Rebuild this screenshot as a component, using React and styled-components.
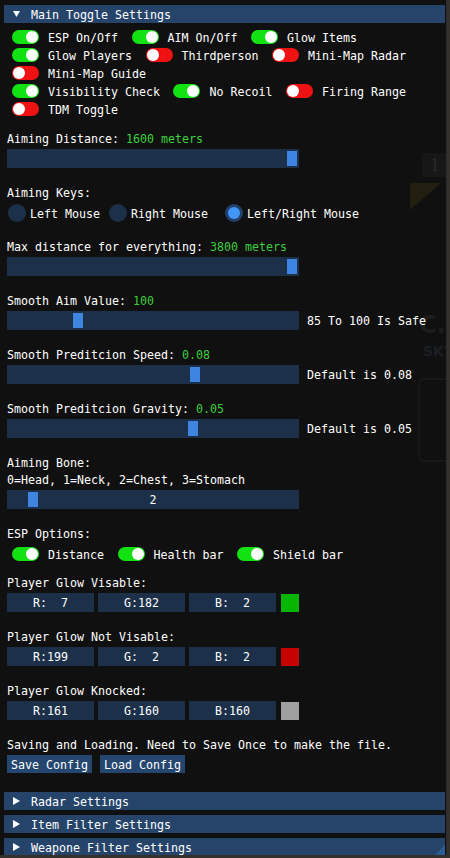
import React from "react";
import styled, { createGlobalStyle } from "styled-components";

const GlobalStyle = createGlobalStyle`
  html, body {
    margin: 0;
    padding: 0;
    background: #34302c;
    overflow: hidden;
  }
  body {
    font-family: "DejaVu Sans Mono", "Liberation Mono", monospace;
    font-size: 11.63px;
    color: #ffffff;
  }
`;

const Window = styled.div`
  position: relative;
  width: 447px;
  height: 855px;
  box-sizing: border-box;
  padding-top: 5px;
  background: #101010;
  border-right: 1px solid #2a2a30;
  overflow: hidden;
  display: flex;
  flex-direction: column;
`;

const Header = styled.div`
  position: relative;
  width: 441px;
  height: 18px;
  margin: ${p => p.$mt || 0}px 0 0 4px;
  flex-shrink: 0;
  background: #26446a;
  display: flex;
  align-items: center;
  padding-left: 9px;
  box-sizing: border-box;
  line-height: 13px;
  svg {
    margin-right: 11px;
  }
`;

// shifts glyphs down a pixel so they sit like the bitmap font
const Caption = styled.span`
  padding-top: 2px;
  line-height: 13px;
  white-space: pre;
`;

const Body = styled.div`
  position: relative;
  display: flex;
  flex-direction: column;
  align-items: flex-start;
  padding-left: 7px;
`;

const Label = styled.div`
  height: 13px;
  line-height: 15px;
  margin-top: ${p => p.$mt || 0}px;
  white-space: pre;
`;

const Value = styled.span`
  color: #3ccf3c;
`;

const ToggleGrid = styled.div`
  margin-top: ${p => p.$mt || 0}px;
  padding-left: 5px;
  display: flex;
  flex-direction: column;
`;

const ToggleRow = styled.div`
  height: 18px;
  display: flex;
  align-items: center;
  gap: 13.5px;
`;

const ToggleItem = styled.div`
  display: flex;
  align-items: center;
  gap: 9px;
`;

const Pill = styled.div`
  width: 27px;
  height: 14px;
  padding: 1px;
  box-sizing: border-box;
  border-radius: 7px;
  background: ${p => (p.$on ? "#12e212" : "#f01212")};
  display: flex;
  justify-content: ${p => (p.$on ? "flex-end" : "flex-start")};
`;

const Knob = styled.div`
  width: 12px;
  height: 12px;
  border-radius: 50%;
  background: #ffffff;
`;

const SliderRow = styled.div`
  margin-top: 4px;
  display: flex;
  align-items: center;
  gap: 8px;
`;

const SliderFrame = styled.div`
  position: relative;
  width: 292px;
  height: 19px;
  box-sizing: border-box;
  padding: 0 2px;
  background: #1d3049;
  display: flex;
  align-items: center;
`;

const Grab = styled.div`
  width: 10px;
  height: 15px;
  background: #3d85e0;
`;

const SliderText = styled.div`
  position: absolute;
  left: 0;
  right: 0;
  top: 4px;
  text-align: center;
  line-height: 13px;
`;

const RadioRow = styled.div`
  margin-top: 5px;
  height: 18px;
  padding-left: 1px;
  display: flex;
  align-items: center;
  gap: 9px;
`;

const RadioItem = styled.div`
  display: flex;
  align-items: center;
  gap: 4px;
  margin-left: ${p => (p.$spaced ? 8 : 0)}px;
`;

const RadioCircle = styled.div`
  width: 18px;
  height: 18px;
  border-radius: 50%;
  background: ${p => (p.$checked ? "#22406a" : "#1d3049")};
  display: flex;
  align-items: center;
  justify-content: center;
  &::after {
    content: "";
    display: ${p => (p.$checked ? "block" : "none")};
    width: 12px;
    height: 12px;
    border-radius: 50%;
    background: #4296fa;
  }
`;

const ColorRow = styled.div`
  margin-top: 4px;
  display: flex;
  align-items: center;
  gap: 4px;
`;

const NumField = styled.div`
  width: 87px;
  height: 19px;
  background: #1d3049;
  text-align: center;
  line-height: 21px;
  white-space: pre;
`;

const Swatch = styled.div`
  width: 18px;
  height: 18px;
  margin-left: 1px;
  background: ${p => p.$color};
`;

const ButtonRow = styled.div`
  margin-top: 4px;
  display: flex;
  gap: 8px;
`;

const Button = styled.div`
  height: 18px;
  padding: 0 4px;
  background: #24466f;
  line-height: 20px;
  white-space: pre;
`;

const Backdrop = styled.div`
  position: absolute;
  left: ${p => p.$x}px;
  top: ${p => p.$y}px;
`;

const NumberBox = styled(Backdrop)`
  width: 26px;
  height: 24px;
  border-radius: 3px;
  background: #171717;
  color: #292929;
  font-family: "DejaVu Serif", serif;
  font-size: 17px;
  line-height: 24px;
  text-align: center;
`;

const Ghost = styled(Backdrop)`
  color: ${p => p.$color};
  font-family: "DejaVu Sans", sans-serif;
  font-weight: bold;
  font-size: ${p => p.$size}px;
  line-height: 1;
  white-space: pre;
`;

const GhostFrame = styled(Backdrop)`
  width: 40px;
  height: 80px;
  border: 2px solid #181818;
  border-radius: 6px;
`;

const ResizeGrip = styled.div`
  position: absolute;
  right: 1px;
  bottom: 0;
  width: 0;
  height: 0;
  border-left: 10px solid transparent;
  border-bottom: 10px solid #2c5c94;
`;

const Arrow = ({ open }) =>
  open ? (
    <svg width="7" height="6" viewBox="0 0 7 6">
      <polygon points="0,0 7,0 3.5,6" fill="#fff" />
    </svg>
  ) : (
    <svg width="7" height="8" viewBox="0 0 7 8">
      <polygon points="0,0 7,4 0,8" fill="#fff" />
    </svg>
  );

const Toggle = ({ on, label }) => (
  <ToggleItem>
    <Pill $on={on}>
      <Knob />
    </Pill>
    <Caption>{label}</Caption>
  </ToggleItem>
);

const Slider = ({ frac, note, text }) => (
  <SliderRow>
    <SliderFrame>
      <Grab style={{ marginLeft: Math.round(frac * 278) }} />
      {text && <SliderText>{text}</SliderText>}
    </SliderFrame>
    {note && <Caption>{note}</Caption>}
  </SliderRow>
);

const ColorFields = ({ r, g, b }) => {
  const pad = n => String(n).padStart(3, " ");
  return (
    <ColorRow>
      <NumField>R:{pad(r)}</NumField>
      <NumField>G:{pad(g)}</NumField>
      <NumField>B:{pad(b)}</NumField>
      <Swatch $color={`rgb(${r},${g},${b})`} />
    </ColorRow>
  );
};

const toggleRows = [
  [["ESP On/Off", true], ["AIM On/Off", true], ["Glow Items", true]],
  [["Glow Players", true], ["Thirdperson", false], ["Mini-Map Radar", false]],
  [["Mini-Map Guide", false]],
  [["Visibility Check", true], ["No Recoil", true], ["Firing Range", false]],
  [["TDM Toggle", false]]
];

export default function App() {
  return (
    <>
      <GlobalStyle />
      <Window>
        <NumberBox $x={422} $y={153}>1</NumberBox>
        <Backdrop $x={410} $y={183}>
          <svg width="31" height="28" viewBox="0 0 31 28">
            <polygon points="0,0 31,0 0,27" fill="#221f10" />
          </svg>
        </Backdrop>
        <Ghost $x={419} $y={313} $size={24} $color="#1d1d1d">C.A</Ghost>
        <Ghost $x={423} $y={344} $size={14} $color="#1b1f23">SKY</Ghost>
        <GhostFrame $x={418} $y={378} />

        <Header>
          <Arrow open />
          <Caption>Main Toggle Settings</Caption>
        </Header>

        <Body>
          <ToggleGrid $mt={5}>
            {toggleRows.map((row, i) => (
              <ToggleRow key={i}>
                {row.map(([label, on]) => (
                  <Toggle key={label} label={label} on={on} />
                ))}
              </ToggleRow>
            ))}
          </ToggleGrid>

          <Label $mt={14}>
            Aiming Distance: <Value>1600 meters</Value>
          </Label>
          <Slider frac={1} />

          <Label $mt={18}>Aiming Keys:</Label>
          <RadioRow>
            <RadioItem>
              <RadioCircle />
              <Caption>Left Mouse</Caption>
            </RadioItem>
            <RadioItem>
              <RadioCircle />
              <Caption>Right Mouse</Caption>
            </RadioItem>
            <RadioItem $spaced>
              <RadioCircle $checked />
              <Caption>Left/Right Mouse</Caption>
            </RadioItem>
          </RadioRow>

          <Label $mt={18}>
            Max distance for everything: <Value>3800 meters</Value>
          </Label>
          <Slider frac={1} />

          <Label $mt={18}>
            Smooth Aim Value: <Value>100</Value>
          </Label>
          <Slider frac={0.23} note="85 To 100 Is Safe" />

          <Label $mt={18}>
            Smooth Preditcion Speed: <Value>0.08</Value>
          </Label>
          <Slider frac={0.651} note="Default is 0.08" />

          <Label $mt={18}>
            Smooth Preditcion Gravity: <Value>0.05</Value>
          </Label>
          <Slider frac={0.644} note="Default is 0.05" />

          <Label $mt={18}>Aiming Bone:</Label>
          <Label $mt={4}>0=Head, 1=Neck, 2=Chest, 3=Stomach</Label>
          <Slider frac={0.068} text="2" />

          <Label $mt={18}>ESP Options:</Label>
          <ToggleGrid $mt={5}>
            <ToggleRow>
              <Toggle on label="Distance" />
              <Toggle on label="Health bar" />
              <Toggle on label="Shield bar" />
            </ToggleRow>
          </ToggleGrid>

          <Label $mt={13}>Player Glow Visable:</Label>
          <ColorFields r={7} g={182} b={2} />

          <Label $mt={18}>Player Glow Not Visable:</Label>
          <ColorFields r={199} g={2} b={2} />

          <Label $mt={18}>Player Glow Knocked:</Label>
          <ColorFields r={161} g={160} b={160} />

          <Label $mt={18}>Saving and Loading. Need to Save Once to make the file.</Label>
          <ButtonRow>
            <Button>Save Config</Button>
            <Button>Load Config</Button>
          </ButtonRow>
        </Body>

        <Header $mt={19}>
          <Arrow />
          <Caption>Radar Settings</Caption>
        </Header>
        <Header $mt={5}>
          <Arrow />
          <Caption>Item Filter Settings</Caption>
        </Header>
        <Header $mt={5}>
          <Arrow />
          <Caption>Weapone Filter Settings</Caption>
        </Header>

        <ResizeGrip />
      </Window>
    </>
  );
}
